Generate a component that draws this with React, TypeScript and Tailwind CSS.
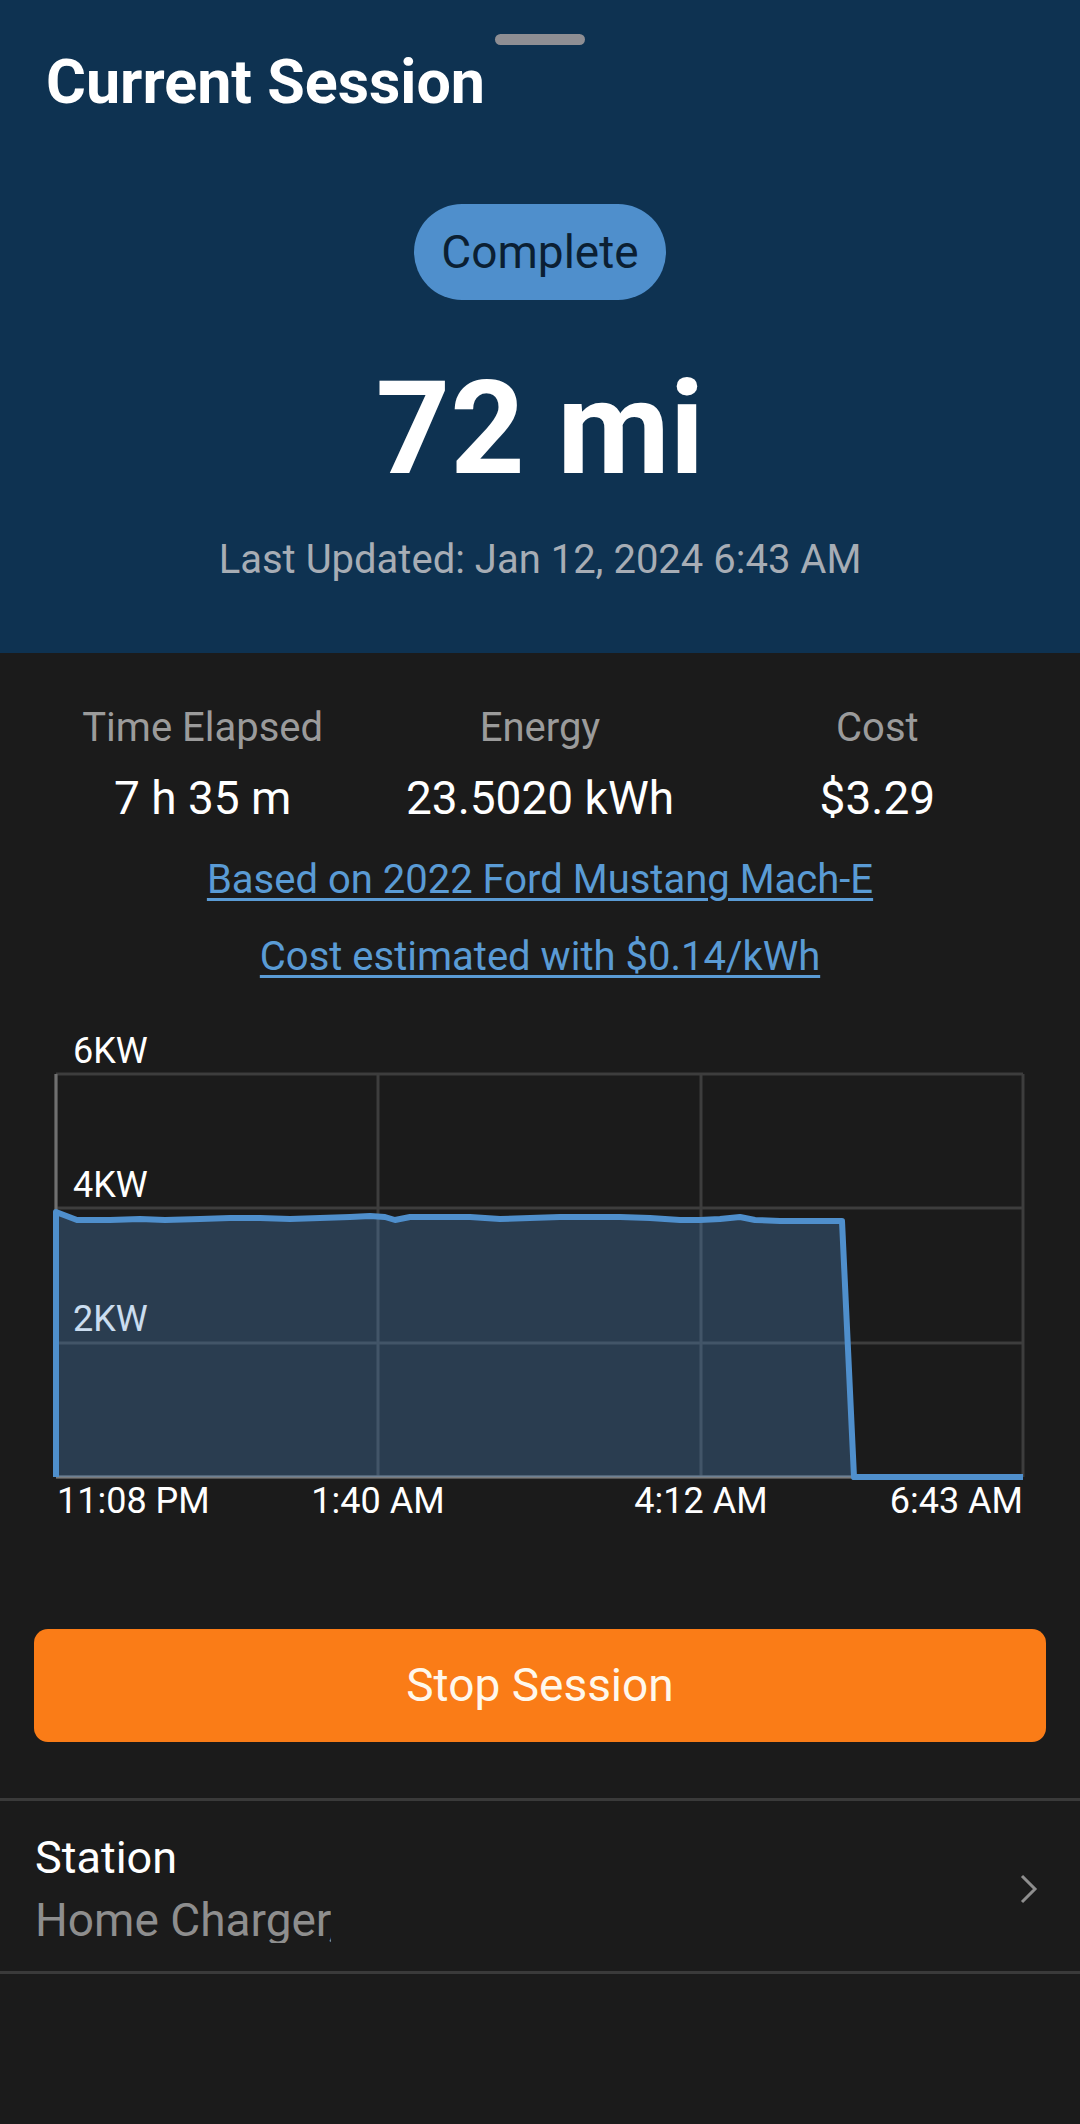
import React from 'react';

const LINE = '#4f8fcc';

// plateau samples of the power curve, [x, y] in chart coordinates
const plateau: [number, number][] = [
  [56, 192], [77, 200], [110, 200], [140, 199], [165, 200], [200, 199], [230, 198], [260, 198],
  [290, 199], [320, 198], [350, 197], [370, 196], [385, 197], [395, 200], [410, 197], [440, 197],
  [470, 197], [500, 199], [530, 198], [560, 197], [590, 197], [620, 197], [650, 198], [680, 200],
  [700, 200], [720, 199], [740, 197], [755, 200], [780, 201], [842, 201],
];

function PowerChart() {
  const top = 54;
  const bottom = 457;
  const rows = [54, 188, 323, 457];
  const cols = [56, 378, 701, 1023];
  const linePts = [[56, bottom] as [number, number], ...plateau, [854, bottom] as [number, number], [1023, bottom] as [number, number]];
  const d = linePts.map(([x, y], i) => `${i === 0 ? 'M' : 'L'}${x} ${y}`).join(' ');
  const area = [...plateau, [854, bottom] as [number, number]].map(([x, y]) => `L${x} ${y}`).join(' ');

  return (
    <svg width="1080" height="505" viewBox="0 0 1080 505" className="block mt-[43px]">
      {rows.map((y, i) => (
        <line key={`r${i}`} x1={56} x2={1023} y1={y} y2={y} stroke="#3d3d3d" strokeWidth={3} />
      ))}
      {cols.map((x, i) => (
        <line key={`c${i}`} x1={x} x2={x} y1={top} y2={bottom} stroke="#3d3d3d" strokeWidth={3} />
      ))}
      <line x1={56} x2={56} y1={top} y2={bottom} stroke="#707070" strokeWidth={3} />
      <line x1={56} x2={1023} y1={bottom} y2={bottom} stroke="#7a7a7a" strokeWidth={3} />

      <g fill="#ffffff" fontFamily="Roboto, sans-serif" fontSize={36}>
        <text x={73} y={43}>6KW</text>
        <text x={73} y={177}>4KW</text>
        <text x={73} y={311}>2KW</text>
      </g>

      <path d={`M56 ${bottom} ${area} Z`} fill={LINE} fillOpacity={0.3} />
      <path d={d} fill="none" stroke={LINE} strokeWidth={6} strokeLinejoin="round" />

      <g fill="#ffffff" fontFamily="Roboto, sans-serif" fontSize={36}>
        <text x={57} y={493}>11:08 PM</text>
        <text x={378} y={493} textAnchor="middle">1:40 AM</text>
        <text x={701} y={493} textAnchor="middle">4:12 AM</text>
        <text x={1023} y={493} textAnchor="end">6:43 AM</text>
      </g>
    </svg>
  );
}

export default function App() {
  const stats = [
    { label: 'Time Elapsed', value: '7 h 35 m' },
    { label: 'Energy', value: '23.5020 kWh' },
    { label: 'Cost', value: '$3.29' },
  ];

  return (
    <div className="min-h-[2124px] w-[1080px] bg-[#1b1b1b] font-['Roboto',sans-serif]">
      {/* header */}
      <div className="relative bg-[#0e3251] pt-[52px] pb-[73px] flex flex-col items-center">
        <div className="absolute top-[34px] left-[495px] w-[90px] h-[11px] rounded-full bg-[#8e8e93]" />
        <h1 className="self-start pl-[46px] text-[61px] leading-none font-bold text-white">Current Session</h1>
        <div className="mt-[91px] h-[96px] px-[27px] flex items-center rounded-full bg-[#4f8fcc]">
          <span className="text-[46px] leading-none text-[#0b1f33]">Complete</span>
        </div>
        <div className="mt-[64px] text-[130px] leading-none font-bold text-white">72 mi</div>
        <div className="mt-[46px] text-[40px] leading-none text-[#a7adb5]">Last Updated: Jan 12, 2024 6:43 AM</div>
      </div>

      {/* stats */}
      <div className="pt-[55px] px-[34px] grid grid-cols-3 text-center">
        {stats.map(s => (
          <div key={s.label} className="flex flex-col items-center">
            <span className="text-[40px] leading-none text-[#9b9b9b]">{s.label}</span>
            <span className="mt-[27px] text-[46px] leading-none text-white">{s.value}</span>
          </div>
        ))}
      </div>
      <div className="flex flex-col items-center">
        <a className="mt-[39px] text-[40px] leading-none text-[#5a9bd5] underline underline-offset-[5px] decoration-[3px]">
          Based on 2022 Ford Mustang Mach-E
        </a>
        <a className="mt-[37px] text-[40px] leading-none text-[#5a9bd5] underline underline-offset-[5px] decoration-[3px]">
          Cost estimated with $0.14/kWh
        </a>
      </div>

      <PowerChart />

      <div className="px-[34px] mt-[104px]">
        <button className="w-full h-[113px] rounded-[14px] bg-[#fa7c17] text-[46px] text-[#fff8ec]">Stop Session</button>
      </div>

      <div className="mt-[56px] h-[3px] bg-[#3a3a3a]" />
      <div className="flex items-center justify-between pl-[35px] pr-[42px] pt-[34px] pb-[28px]">
        <div className="flex flex-col">
          <span className="text-[45px] leading-none text-white">Station</span>
          <span className="mt-[17px] w-[296px] overflow-hidden whitespace-nowrap text-[46px] leading-none text-[#8e8e8e]">
            Home Charger, 12 Elm Street
          </span>
        </div>
        <svg width="18" height="30" viewBox="0 0 18 30" fill="none">
          <path d="M2 2 L15 15 L2 28" stroke="#8e8e8e" strokeWidth={3} />
        </svg>
      </div>
      <div className="h-[3px] bg-[#3a3a3a]" />
    </div>
  );
}
